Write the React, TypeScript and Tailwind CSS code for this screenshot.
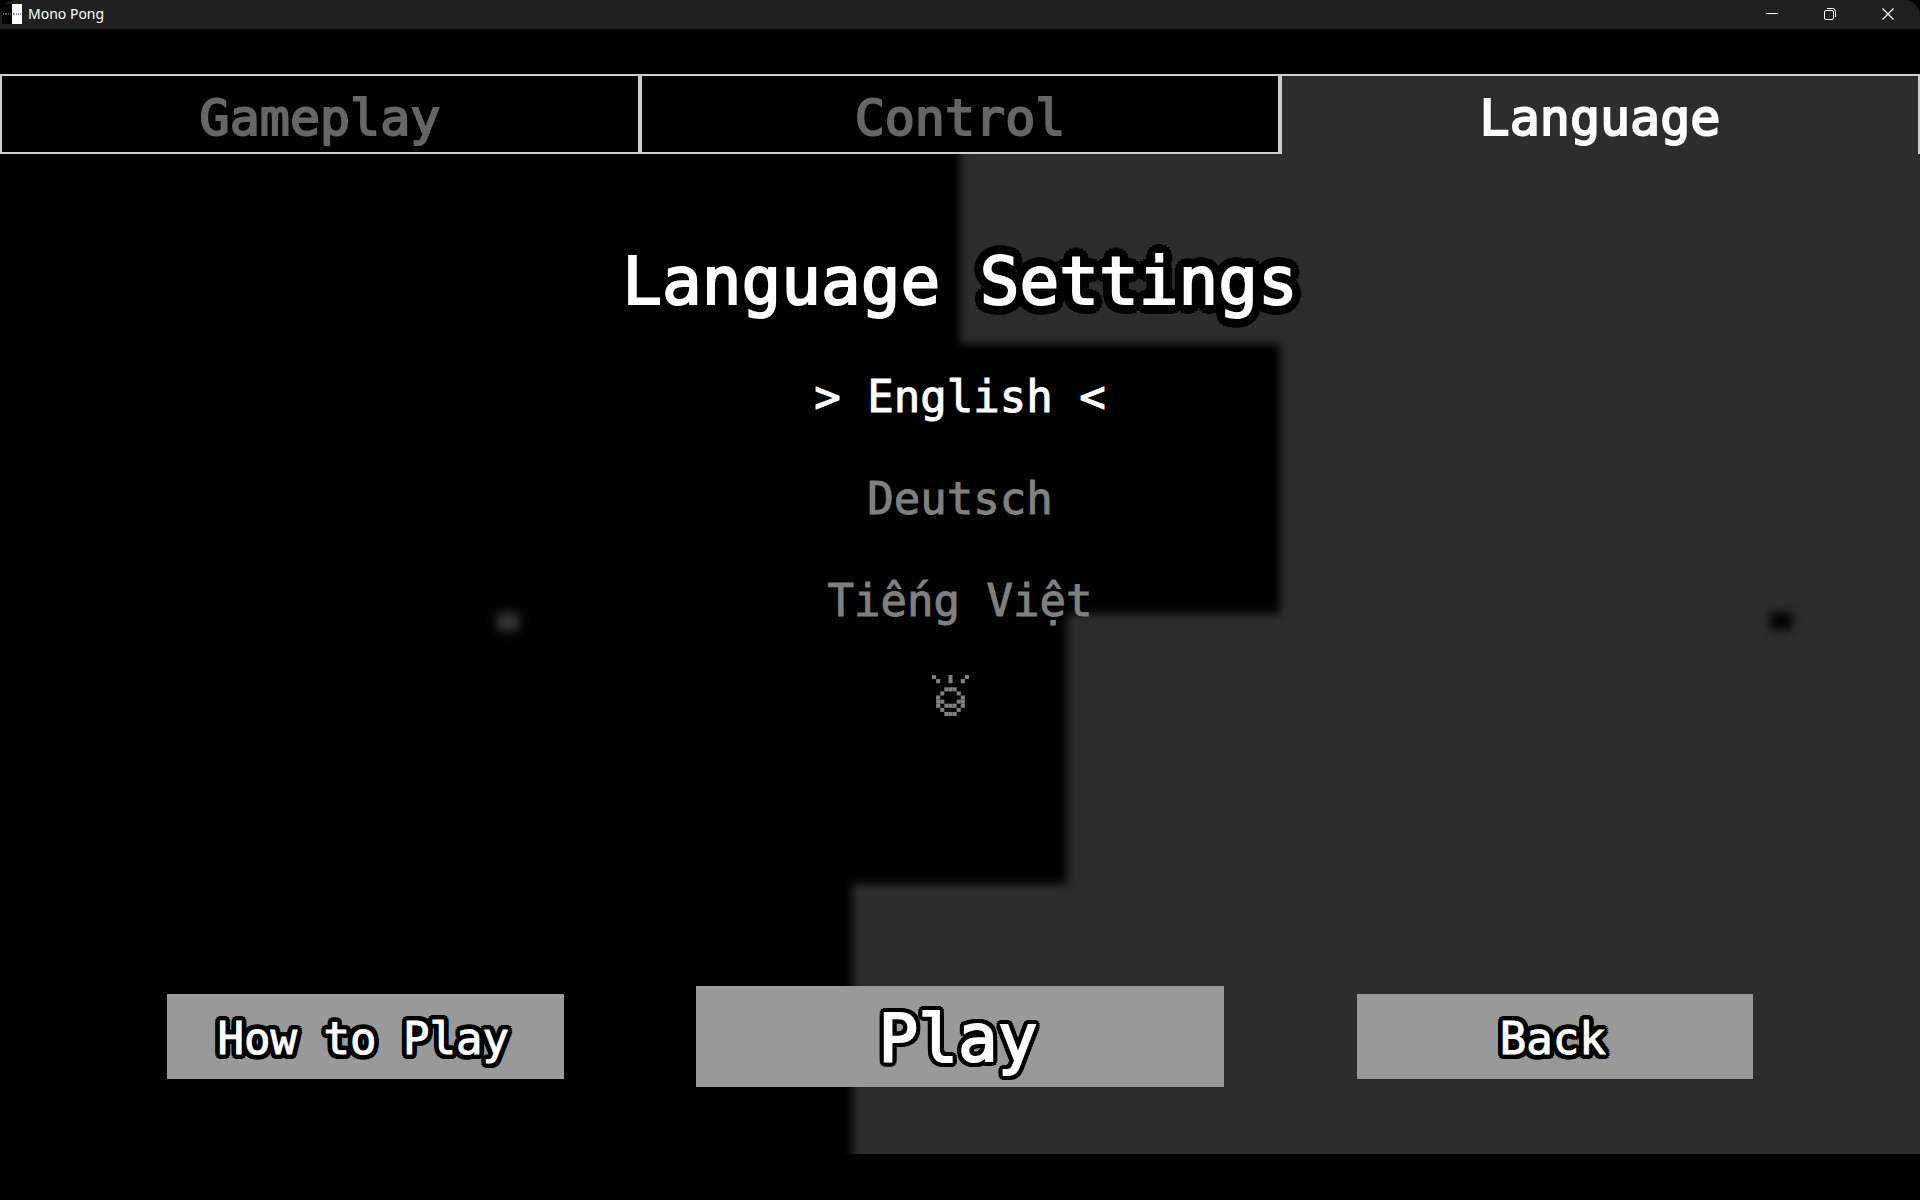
import React, { useState } from 'react'
import clsx from 'clsx'

const tabs = ['Gameplay', 'Control', 'Language']

const languages = [
  { id: 'en', label: 'English' },
  { id: 'de', label: 'Deutsch' },
  { id: 'vi', label: 'Tiếng Việt' },
  { id: 'tok', label: 'toki pona' },
]

const glyphRows = [
  '#...#...#',
  '.#..#..#.',
  '.........',
  '...###...',
  '..#...#..',
  '.#.....#.',
  '.##...##.',
  '.#.###.#.',
  '..#...#..',
  '...###...',
]

function TokiPonaGlyph() {
  return (
    <svg viewBox="0 0 9 10" className="w-[37px] h-[41px]" preserveAspectRatio="none" fill="currentColor" aria-hidden="true">
      {glyphRows.map((row, y) =>
        row.split('').map((cell, x) =>
          cell === '#' ? <rect key={`${x}-${y}`} x={x} y={y} width="1" height="1" /> : null
        )
      )}
    </svg>
  )
}

function TitleBar() {
  return (
    <header className="flex items-center h-[29px] bg-[#202020] rounded-t-2xl pl-0.5 pr-[3px] pb-0.5 font-['Noto_Sans','Open_Sans',sans-serif] text-white">
      <svg viewBox="0 0 20 20" className="w-5 h-5" aria-hidden="true">
        <rect width="10" height="20" fill="#000" />
        <rect x="10" width="10" height="20" fill="#fff" />
        <path d="M1 10h1m1 0h2m1 0h1m1 0h1" stroke="#aaa" />
        <path d="M11 10h2m1 0h1m1 0h1m1 0h1" stroke="#333" />
      </svg>
      <h1 className="pl-1.5 text-[14px] leading-5">Mono Pong</h1>
      <div className="flex ml-auto h-full">
        <button aria-label="Minimize" className="flex items-center justify-center w-[58px]">
          <svg viewBox="0 0 12 12" className="w-3 h-3" fill="none" stroke="currentColor"><path d="M0 5.5h12" /></svg>
        </button>
        <button aria-label="Restore" className="flex items-center justify-center w-[58px]">
          <svg viewBox="0 0 12 12" className="w-3 h-3" fill="none" stroke="currentColor">
            <rect x="0.5" y="2.5" width="9" height="9" rx="1.5" />
            <path d="M3 .5h5.500a3 3 0 0 1 3 3V9" />
          </svg>
        </button>
        <button aria-label="Close" className="flex items-center justify-center w-[58px]">
          <svg viewBox="0 0 12 12" className="w-3 h-3" fill="none" stroke="currentColor" strokeWidth="1.2"><path d="M.5.5l11 11M11.500.5l-11 11" /></svg>
        </button>
      </div>
    </header>
  )
}

function Field() {
  return (
    <div className="absolute inset-0 overflow-hidden" aria-hidden="true">
      <div className="absolute -inset-y-8 inset-x-0 flex flex-col blur-[5px]">
        <div className="flex-1 pt-8 ml-[50%] -mr-8 bg-[#2d2d2d]" />
        <div className="flex-1 ml-[66.67%] -mr-8 bg-[#2d2d2d]" />
        <div className="flex-1 ml-[55.56%] -mr-8 bg-[#2d2d2d]" />
        <div className="flex-1 pb-8 ml-[44.4%] -mr-8 bg-[#2d2d2d]" />
        <div className="absolute left-[25.9%] top-[49.9%] w-[22px] h-[18px] bg-[#3a3a3a] blur-[3px]" />
        <div className="absolute left-[92.2%] top-[49.8%] w-[22px] h-[18px] bg-black blur-[2px]" />
      </div>
    </div>
  )
}

function GameButton({ big, className, children }: { big?: boolean; className: string; children: React.ReactNode }) {
  return (
    <button
      className={clsx(
        'pt-1 pr-1 bg-[#999999] text-white leading-none',
        '[text-shadow:5px_0_#000,-5px_0_#000,0_5px_#000,0_-5px_#000,4px_4px_#000,-4px_4px_#000,4px_-4px_#000,-4px_-4px_#000,5px_2px_#000,-5px_2px_#000,5px_-2px_#000,-5px_-2px_#000,2px_5px_#000,-2px_5px_#000,2px_-5px_#000,-2px_-5px_#000]',
        big ? 'h-[101px] text-[66px] [-webkit-text-stroke:2px]' : 'h-[85px] text-[44px] [-webkit-text-stroke:1px]',
        className
      )}
    >
      {children}
    </button>
  )
}

export default function App() {
  const [tab, setTab] = useState('Language')
  const [language, setLanguage] = useState('en')

  return (
    <div className="min-h-screen bg-black">
      <TitleBar />
      <main className="relative flex flex-col w-full aspect-video mt-[45px] font-['DejaVu_Sans_Mono','Liberation_Mono',monospace]">
        <Field />
        <div role="tablist" className="relative grid grid-cols-3">
          {tabs.map((name) => (
            <button
              key={name}
              role="tab"
              aria-selected={tab === name}
              onClick={() => setTab(name)}
              className={clsx(
                'h-20 pt-1 border-2 border-[#cccfcc] text-[50px] leading-[76px] [-webkit-text-stroke:2px]',
                tab === name ? 'border-b-0 bg-[#2d2d2d] text-white' : 'bg-black text-[#666666]'
              )}
            >
              {name}
            </button>
          ))}
        </div>

        <section className="relative flex flex-col items-center pt-16">
          <h2 className="text-white text-[66px] leading-[128px] [-webkit-text-stroke:2px] [text-shadow:10px_0_#000,-10px_0_#000,0_10px_#000,0_-10px_#000,9px_4px_#000,-9px_4px_#000,9px_-4px_#000,-9px_-4px_#000,4px_9px_#000,-4px_9px_#000,4px_-9px_#000,-4px_-9px_#000,7px_7px_#000,-7px_7px_#000,7px_-7px_#000,-7px_-7px_#000,5px_0_#000,-5px_0_#000,0_5px_#000,0_-5px_#000]">
            Language Settings
          </h2>
          <ul className="flex flex-col items-center text-[44px] leading-[102px] [text-shadow:2px_0_#000,-2px_0_#000,0_2px_#000,0_-2px_#000]">
            {languages.map(({ id, label }) => {
              const selected = id === language
              return (
                <li key={id}>
                  <button
                    aria-label={label}
                    aria-pressed={selected}
                    onClick={() => setLanguage(id)}
                    className={clsx(
                      'flex items-center h-[102px] whitespace-pre [-webkit-text-stroke:1px]',
                      selected ? 'text-white' : 'text-[#808080]',
                      id === 'tok' && 'pr-5 pb-4'
                    )}
                  >
                    {selected && '> '}
                    {id === 'tok' ? <TokiPonaGlyph /> : label}
                    {selected && ' <'}
                  </button>
                </li>
              )
            })}
          </ul>
        </section>

        <nav className="relative grid grid-cols-12 items-center mt-auto px-[167px] pb-[67px]">
          <GameButton className="col-span-3">How to Play</GameButton>
          <GameButton big className="col-start-5 col-span-4">Play</GameButton>
          <GameButton className="col-start-10 col-span-3">Back</GameButton>
        </nav>
      </main>
    </div>
  )
}
